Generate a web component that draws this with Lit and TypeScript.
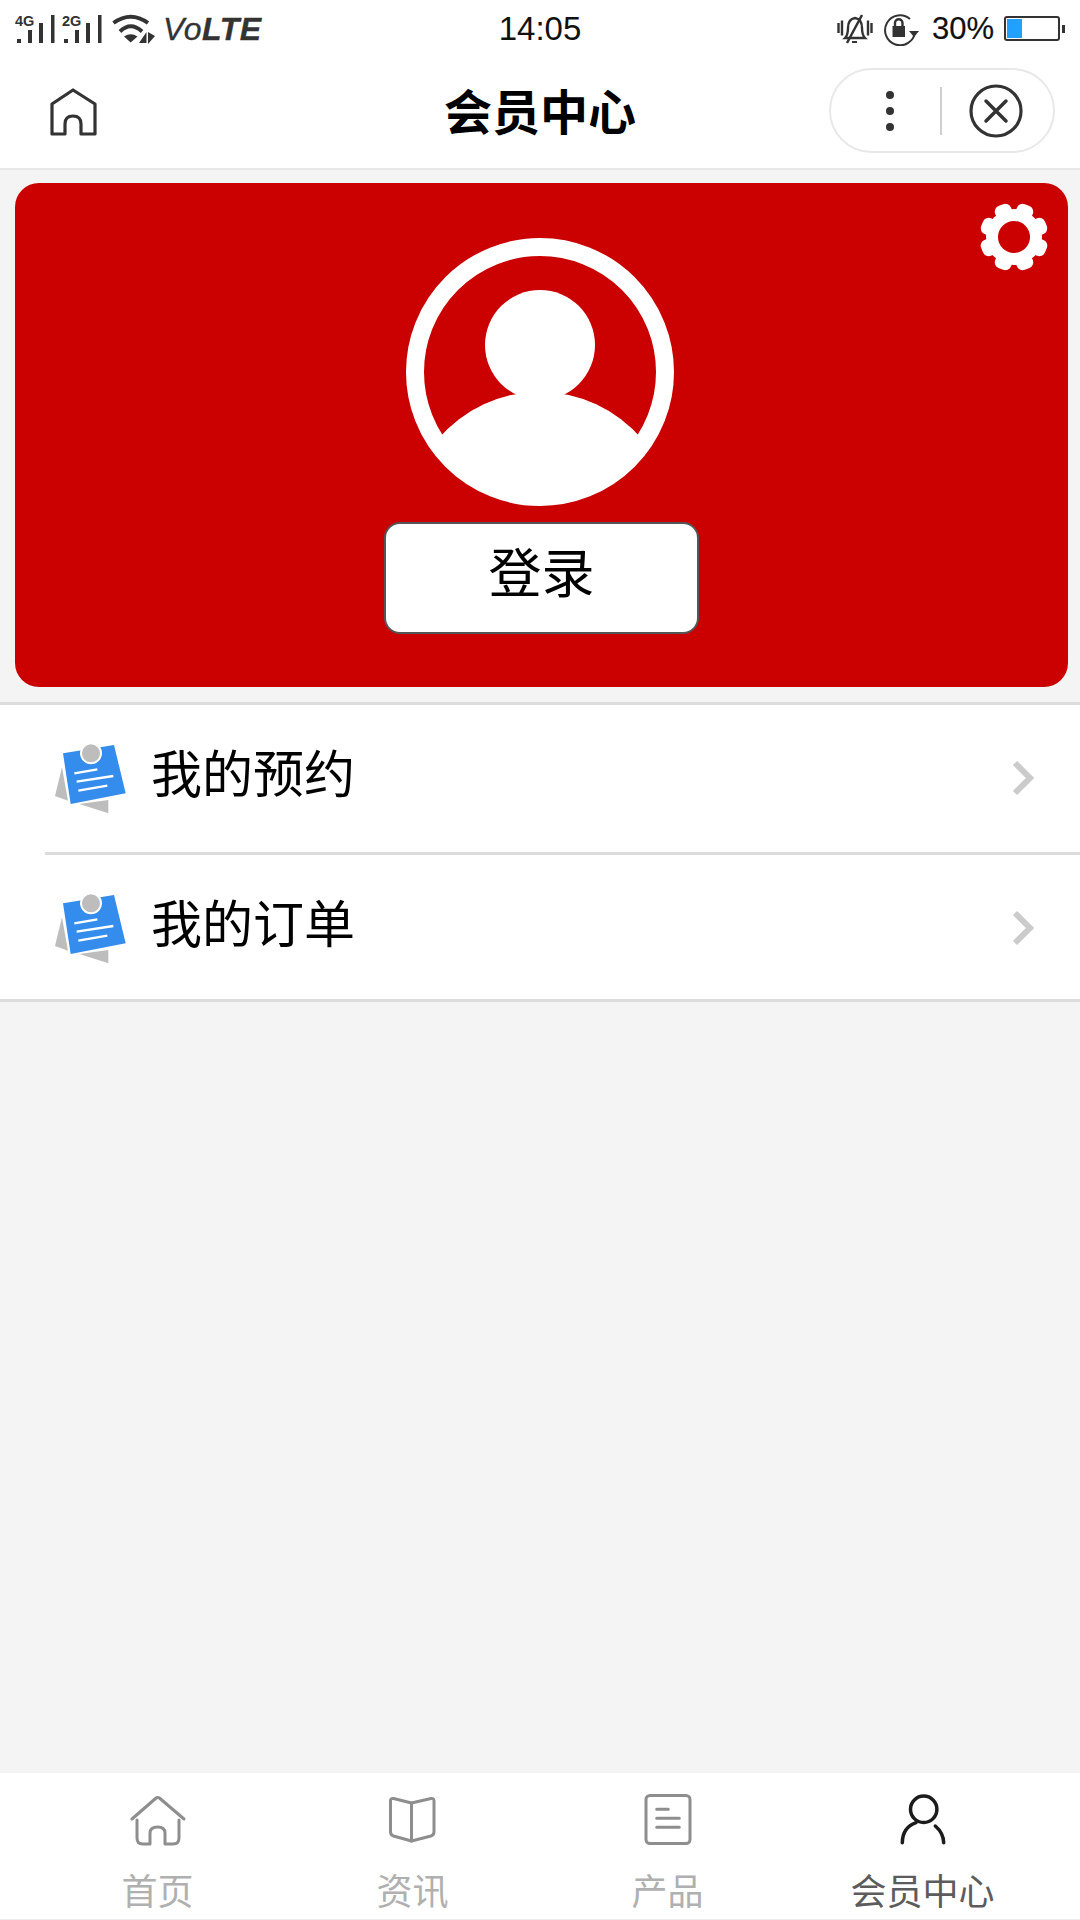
import { LitElement, html, css, svg } from "lit";
import { customElement } from "lit/decorators.js";

const signal = (label: string) => html`<svg class="signal" viewBox="0 0 42 30" width="42" height="30">
  <text x="0" y="12" class="sig-t">${label}</text>
  <rect x="2" y="25" width="4" height="4" /><rect x="13" y="16" width="4" height="13" />
  <rect x="24" y="9" width="4" height="20" /><rect x="36" y="1" width="3.5" height="28" />
</svg>`;

const note = html`<svg class="note" viewBox="0 0 300 270" width="100" height="90">
  <polygon points="66,112 45,198 84,212" fill="#bdbdbd" />
  <polygon points="118,222 205,210 205,250" fill="#bdbdbd" />
  <polygon points="69,70 222,45 257,190 92,222" fill="#348ced" />
  <circle cx="153" cy="70" r="33" fill="#fff" />
  <circle cx="153" cy="70" r="27" fill="#bdbdbd" />
  <g stroke="#fff" stroke-width="7" fill="none">
    <line x1="103" y1="130" x2="172" y2="118" />
    <line x1="110" y1="155" x2="220" y2="138" />
    <line x1="115" y1="182" x2="202" y2="167" />
  </g>
</svg>`;

const chevron = html`<svg class="chev" viewBox="0 0 24 38" width="24" height="38">
  <path d="M4 4 L19 19 L4 34" fill="none" stroke="#cbcbcb" stroke-width="6" />
</svg>`;

const gearTeeth = [22.5, 67.5, 112.5, 157.5, 202.5, 247.5, 292.5, 337.5];

const tabIcons = {
  home: svg`<path d="M4 29 L27.5 8.5 Q29.7 6.5 32 8.5 L56 29" /><path d="M9 30 V48 Q9 54 15 54 H22 V43 Q22 37 29.7 37 Q37 37 37 43 V54 H45 Q51 54 51 48 V30" />`,
  book: svg`<path d="M28.5 13 L10.5 8.5 Q7.5 8 7.5 11 V42 Q7.5 45 10.5 46 L28.5 51 L48 46 Q51 45 51 42 V11 Q51 8 48 8.5 Z" /><path d="M28.5 13 V51" />`,
  doc: svg`<rect x="8" y="5.5" width="44" height="48" rx="4" /><path d="M18.7 19.3 H30.3 M18.7 28.3 H41.3 M18.7 37.3 H41.3" />`,
  user: svg`<circle cx="30.7" cy="19.3" r="13.2" /><path d="M9.3 52.7 C9.5 42 15 35.5 23 32.7 M42.3 36 C47 40 50.5 45.5 50.7 52.7" />`,
};

@customElement("app-root")
export class AppRoot extends LitElement {
  static styles = css`
    :host {
      display: flex;
      flex-direction: column;
      width: 1080px;
      height: 1920px;
      background: #f4f4f4;
      font-family: "Noto Sans CJK SC", "Noto Sans", sans-serif;
      color: #000;
      overflow: hidden;
    }
    .status {
      height: 55px;
      background: #fff;
      display: grid;
      grid-template-columns: 1fr auto 1fr;
      align-items: center;
      padding: 0 15px 0 15px;
      color: #333;
      font-family: "Liberation Sans", sans-serif;
    }
    .st-left, .st-right { display: flex; align-items: center; }
    .st-right { justify-content: flex-end; }
    .signal { fill: #333; margin-right: 5px; }
    .sig-t { font: bold 14.5px "Liberation Sans", sans-serif; }
    .wifi { margin-left: 3px; }
    .volte { margin-left: 5px; font-size: 32px; font-style: italic; line-height: 32px; letter-spacing: 0.5px; -webkit-text-stroke: 0.3px #333; }
    .volte b { font-weight: 700; }
    .time { font-size: 33px; color: #111; line-height: 57px; }
    .pct { font-size: 31px; color: #111; margin: 0 10px 0 11px; line-height: 55px; -webkit-text-stroke: 0.2px #111; }
    .lock { margin-left: 10px; }
    .battery {
      position: relative;
      width: 56px;
      height: 25px;
      box-sizing: border-box;
      border: 2px solid #333;
      border-radius: 3px;
      padding: 1px;
      margin-right: 5px;
      display: flex;
    }
    .battery i { display: block; width: 15px; background: #22a0ff; }
    .battery::after {
      content: "";
      position: absolute;
      right: -7px;
      top: 7px;
      width: 3px;
      height: 8px;
      background: #333;
    }
    .nav {
      height: 115px;
      box-sizing: border-box;
      background: #fff;
      border-bottom: 2px solid #e8e8e8;
      display: grid;
      grid-template-columns: 1fr auto 1fr;
      align-items: center;
    }
    .nav-home { margin-left: 49px; display: block; }
    .title { font-size: 48px; font-weight: 700; line-height: 1; margin-top: -5px; }
    .capsule {
      justify-self: end;
      margin-right: 25px;
      margin-top: -2px;
      width: 226px;
      height: 85px;
      box-sizing: border-box;
      border: 2px solid #e8e8e8;
      border-radius: 43px;
      display: grid;
      grid-template-columns: 109px 2px 1fr;
      align-items: center;
    }
    .dots { display: flex; flex-direction: column; align-items: center; gap: 8px; margin-left: 8px; }
    .dots i { width: 8px; height: 8px; border-radius: 50%; background: #333; }
    .sep { height: 48px; background: #cfcfcf; }
    .close { justify-self: center; display: block; margin-left: -4px; }
    .body { flex: 1; min-height: 0; }
    .card {
      position: relative;
      margin: 13px 12px 15px 15px;
      height: 504px;
      box-sizing: border-box;
      background: #cb0000;
      border-radius: 24px;
      padding-top: 54px;
      display: flex;
      flex-direction: column;
      align-items: center;
    }
    .gear { position: absolute; right: 18px; top: 18px; display: block; }
    .avatar { display: block; margin-left: -3px; }
    .login {
      margin: 15px 0 0 0;
      width: 315px;
      height: 112px;
      box-sizing: border-box;
      background: #fff;
      border: 2px solid #555;
      border-radius: 16px;
      font-size: 53px;
      line-height: 92px;
      text-align: center;
    }
    .list {
      background: #fff;
      border-top: 3px solid #dcdcdc;
      border-bottom: 3px solid #dcdcdc;
    }
    .row {
      height: 147px;
      box-sizing: border-box;
      display: flex;
      align-items: flex-start;
      padding-left: 40px;
    }
    .rule + .row { height: 144px; }
    .rule { height: 3px; margin-left: 45px; background: #dcdcdc; }
    .note { display: block; margin-top: 25px; flex: none; }
    .label { font-size: 51px; line-height: 50px; margin: 41px 0 0 11px; flex: 1; }
    .chev { display: block; margin: 54px 45px 0 0; flex: none; }
    .tabs {
      height: 147px;
      box-sizing: border-box;
      background: #fff;
      border-bottom: 1px solid #eee;
      padding: 0 30px;
      display: grid;
      grid-template-columns: repeat(4, 1fr);
    }
    .tab { display: flex; flex-direction: column; align-items: center; padding-top: 17px; color: #b0b0b0; font-size: 36px; line-height: 40px; }
    .tab svg { display: block; fill: none; stroke: #8e8e8e; stroke-width: 3; stroke-linecap: round; stroke-linejoin: round; margin-bottom: 19px; }
    .tab.on { color: #5c5c5c; }
    .tab.on svg { stroke: #1c1c1c; stroke-width: 3.5; }
  `;

  private tab(icon: keyof typeof tabIcons, label: string, on = false) {
    return html`<div class="tab ${on ? "on" : ""}">
      <svg viewBox="0 0 60 60" width="60" height="60">${tabIcons[icon]}</svg>
      <span>${label}</span>
    </div>`;
  }

  render() {
    return html`
      <div class="status">
        <div class="st-left">
          ${signal("4G")}${signal("2G")}
          <svg class="wifi" viewBox="0 0 46 30" width="46" height="30">
            <g fill="none" stroke="#333" stroke-width="4">
              <path d="M1.5 9 Q18.7 -3.5 36 9" /><path d="M8 17.5 Q18.7 7 30 17.5" />
            </g>
            <path d="M12 22.5 Q18.7 18 25.5 22.5 L18.7 28.5 Z" fill="#333" />
            <path d="M34.5 18 V29 H27 Z M36 18 V30 L43 22 Z" fill="#333" />
          </svg>
          <span class="volte">Vo<b>LTE</b></span>
        </div>
        <div class="time">14:05</div>
        <div class="st-right">
          <svg viewBox="0 0 36 30" width="36" height="30">
            <g fill="none" stroke="#333" stroke-width="2.4">
              <path d="M1.5 9 V19 M5 6.5 V21.5 M31 6.5 V21.5 M34.5 9 V19" />
              <path d="M8 24 Q11 21 11 14 Q11 5 18 4 Q25 5 25 14 Q25 21 28 24 Z" />
            </g>
            <path d="M25 1 L10 29" stroke="#333" stroke-width="2.5" />
            <path d="M15 28 H20" stroke="#333" stroke-width="2" />
          </svg>
          <svg class="lock" viewBox="0 0 38 34" width="38" height="34">
            <path d="M32 20 A15 15 0 1 1 27 7" fill="none" stroke="#333" stroke-width="2" />
            <path d="M26 19 H36 L31 25 Z" fill="#333" />
            <path d="M9.5 14 H22 V25 H9.5 Z" fill="#333" />
            <path d="M12 14 V11 A3.7 3.7 0 0 1 19.5 11 V14" fill="none" stroke="#333" stroke-width="2.4" />
          </svg>
          <span class="pct">30%</span>
          <div class="battery"><i></i></div>
        </div>
      </div>

      <div class="nav">
        <svg class="nav-home" viewBox="0 0 48 48" width="48" height="48" fill="none" stroke="#333" stroke-width="3.2" stroke-linejoin="round">
          <path d="M3 16 L24 2 L46 16 V46 H32 V36 Q32 28 24 28 Q16 28 16 36 V46 H3 Z" />
        </svg>
        <div class="title">会员中心</div>
        <div class="capsule">
          <div class="dots"><i></i><i></i><i></i></div>
          <div class="sep"></div>
          <svg class="close" viewBox="0 0 54 54" width="54" height="54" fill="none" stroke="#333">
            <circle cx="27" cy="27" r="25" stroke-width="3.2" />
            <path d="M17 17 L37 37 M37 17 L17 37" stroke-width="3.5" stroke-linecap="round" />
          </svg>
        </div>
      </div>

      <div class="body">
        <div class="card">
          <svg class="gear" viewBox="0 0 72 72" width="72" height="72">
            <circle cx="36" cy="36" r="28" fill="#fff" />
            ${gearTeeth.map(
              (a) => svg`<rect x="27.5" y="1.5" width="17" height="16" rx="6" fill="#fff" transform="rotate(${a} 36 36)" />`
            )}
            <circle cx="36" cy="36" r="16" fill="#cb0000" />
          </svg>
          <svg class="avatar" viewBox="0 0 270 270" width="270" height="270">
            <circle cx="135" cy="135" r="125" fill="none" stroke="#fff" stroke-width="18" />
            <circle cx="135" cy="108" r="55" fill="#fff" />
            <path d="M33 202 A134 134 0 0 1 237 202 A122 122 0 0 1 33 202 Z" fill="#fff" />
          </svg>
          <div class="login">登录</div>
        </div>

        <div class="list">
          <div class="row">${note}<div class="label">我的预约</div>${chevron}</div>
          <div class="rule"></div>
          <div class="row">${note}<div class="label">我的订单</div>${chevron}</div>
        </div>
      </div>

      <div class="tabs">
        ${this.tab("home", "首页")}
        ${this.tab("book", "资讯")}
        ${this.tab("doc", "产品")}
        ${this.tab("user", "会员中心", true)}
      </div>
    `;
  }
}
